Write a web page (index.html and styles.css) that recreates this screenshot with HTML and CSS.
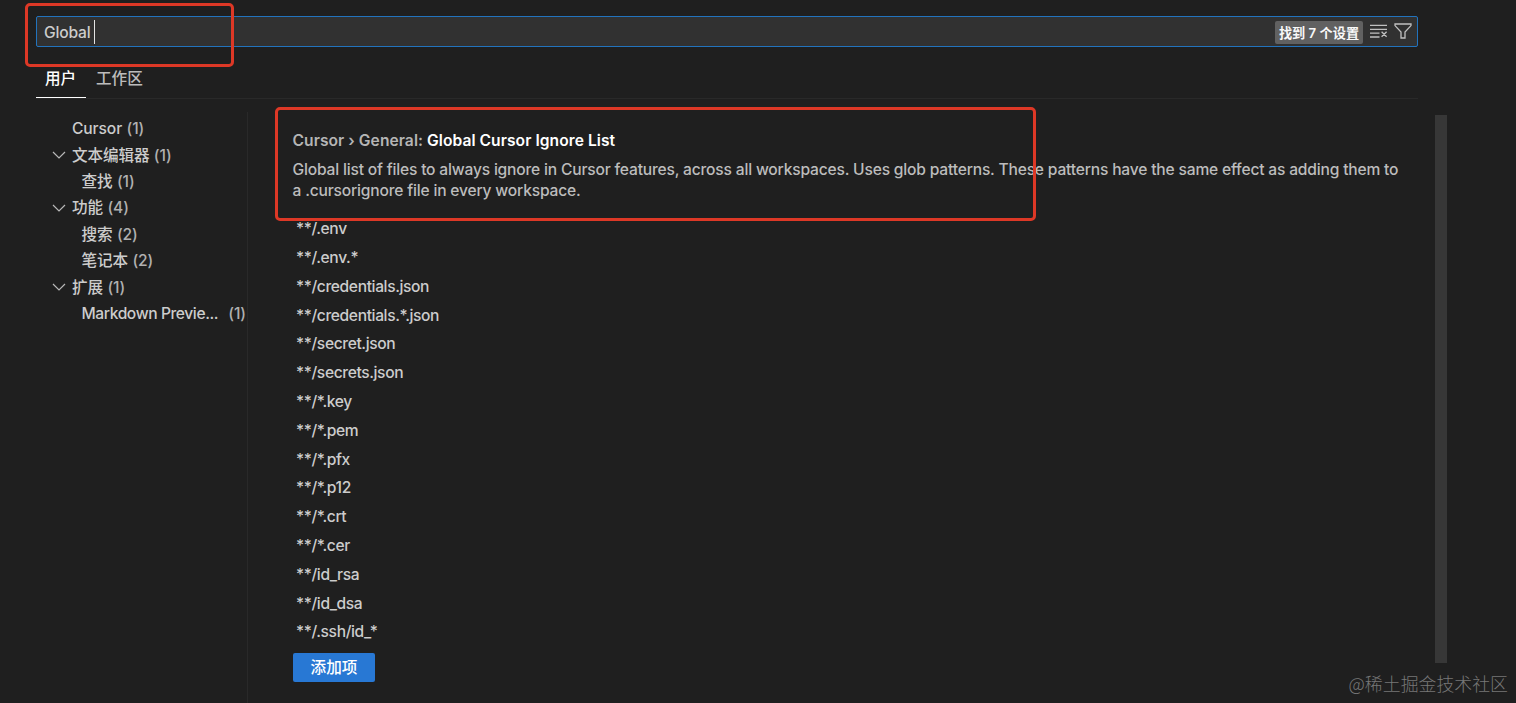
FILE: index.html
```
<!DOCTYPE html>
<html lang="zh-CN">
<head>
<meta charset="utf-8">
<title>设置</title>
<link rel="stylesheet" href="styles.css">
</head>
<body>
<div class="settings">
  <header class="header">
    <div class="search">
      <span class="query">Global</span><span class="caret"></span>
      <div class="search-tools">
        <span class="count">找到 7 个设置</span>
        <svg class="icon clear" width="18" height="18" viewBox="0 0 18 18"><path d="M0 3.4h17M0 7.3h17M0 11.2h9.5M0 15h9.5M11.6 9.8l5 5M16.6 9.8l-5 5"/></svg>
        <svg class="icon filter" width="18" height="18" viewBox="0 0 18 18"><path d="M1 2h16v1.6l-6 6.4v6H7v-6L1 3.6z"/></svg>
      </div>
    </div>
    <nav class="tabs">
      <span class="tab active">用户</span>
      <span class="tab">工作区</span>
    </nav>
  </header>
  <div class="body">
    <aside class="toc">
      <div class="row">Cursor <span class="num">(1)</span></div>
      <div class="row group"><svg class="chevron" width="14" height="8" viewBox="0 0 14 8"><path d="M1 1l6 6 6-6"/></svg>文本编辑器 <span class="num">(1)</span></div>
      <div class="row child">查找 <span class="num">(1)</span></div>
      <div class="row group"><svg class="chevron" width="14" height="8" viewBox="0 0 14 8"><path d="M1 1l6 6 6-6"/></svg>功能 <span class="num">(4)</span></div>
      <div class="row child">搜索 <span class="num">(2)</span></div>
      <div class="row child">笔记本 <span class="num">(2)</span></div>
      <div class="row group"><svg class="chevron" width="14" height="8" viewBox="0 0 14 8"><path d="M1 1l6 6 6-6"/></svg>扩展 <span class="num">(1)</span></div>
      <div class="row child spread"><span class="long">Markdown Previe...</span><span class="num">(1)</span></div>
    </aside>
    <main class="content">
      <h1 class="title"><span class="category">Cursor › General: </span><span class="name">Global Cursor Ignore List</span></h1>
      <p class="description"><span class="line">Global list of files to always ignore in Cursor features, across all workspaces. Uses glob patterns. These patterns have the same effect as adding them to</span><span class="line">a .cursorignore file in every workspace.</span></p>
      <ul class="patterns">
        <li>**/.env</li>
        <li>**/.env.*</li>
        <li>**/credentials.json</li>
        <li>**/credentials.*.json</li>
        <li>**/secret.json</li>
        <li>**/secrets.json</li>
        <li>**/*.key</li>
        <li>**/*.pem</li>
        <li>**/*.pfx</li>
        <li>**/*.p12</li>
        <li>**/*.crt</li>
        <li>**/*.cer</li>
        <li>**/id_rsa</li>
        <li>**/id_dsa</li>
        <li>**/.ssh/id_*</li>
      </ul>
      <button class="add">添加项</button>
    </main>
    <div class="scrollbar"></div>
  </div>
  <div class="mark mark-search"></div>
  <div class="mark mark-setting"></div>
  <div class="watermark">@稀土掘金技术社区</div>
</div>
</body>
</html>
```
FILE: styles.css
```
* { box-sizing: border-box; }
body {
  margin: 0;
  background: #1f1f1f;
  color: #cccccc;
  font-family: "Inter", "Noto Sans CJK SC", sans-serif;
  font-size: 15.6px;
  font-weight: 450;
  font-feature-settings: "calt" 0;
}
.settings {
  position: relative;
  width: 1516px;
  height: 703px;
  overflow: hidden;
  display: flex;
  flex-direction: column;
}
.header { padding: 16px 98px 0 36px; height: 99px; }
.search {
  display: flex;
  align-items: center;
  height: 31px;
  padding: 0 5px 0 7px;
  background: #313131;
  border: 1px solid #2273bd;
  border-radius: 2px;
}
.query { padding-top: 2px; letter-spacing: -0.2px; }
.caret { width: 1px; height: 24px; margin-left: 4px; background: #e4e4e4; }
.search-tools { display: flex; align-items: center; margin-left: auto; }
.count {
  width: 88px;
  height: 23px;
  line-height: 25px;
  margin-right: 7px;
  margin-top: 1px;
  text-align: center;
  white-space: nowrap;
  background: #616161;
  color: #f8f8f8;
  border-radius: 2px;
  font-size: 13.2px;
  font-weight: 600;
}
.icon { position: relative; top: -0.5px; fill: none; stroke: #c0c0c0; stroke-width: 1.3; }
.clear { margin-right: 6px; }
.tabs { display: flex; height: 52px; border-bottom: 1px solid #292929; }
.tab { height: 51px; padding: 20px 10px 0 10px; line-height: 24px; color: #bcbcbc; white-space: nowrap; }
.tab.active { width: 50px; padding-left: 9px; color: #fff; font-weight: 500; border-bottom: 1px solid #fff; }
.body { display: flex; height: 604px; }
.toc {
  width: 248px;
  margin-top: 13px;
  padding: 4.2px 1px 0 0;
  border-right: 1px solid #292929;
}
.row {
  display: flex;
  align-items: center;
  height: 26.4px;
  line-height: 26.4px;
  padding-left: 72px;
  gap: 4.4px;
  white-space: nowrap;
  letter-spacing: -0.1px;
}
.row.group { padding-left: 52px; }
.row.child { padding-left: 81.5px; }
.num { color: #b0b0b0; }
.row.spread { justify-content: space-between; }
.long { letter-spacing: -0.4px; }
.chevron { width: 14px; margin: -2px 1.6px 0 0; fill: none; stroke: #b8b8b8; stroke-width: 1.2; }
.content { width: 1187px; padding: 30px 0 0 44.5px; }
.title { margin: 0; font-size: 15.6px; font-weight: 600; line-height: 24px; white-space: pre; letter-spacing: 0.06px; }
.category { color: #b5b5b5; }
.name { color: #fff; }
.description { margin: 6px 0 0; line-height: 21px; color: #bcbcbc; letter-spacing: -0.183px; }
.line { display: block; white-space: nowrap; }
.patterns { list-style: none; margin: 14.3px 0 0; padding: 0 0 0 3.5px; letter-spacing: -0.38px; }
.patterns li { height: 28.8px; line-height: 28.8px; }
.add {
  display: block;
  width: 82px;
  height: 29px;
  margin-top: 5.7px;
  margin-left: 0.5px;
  padding: 0;
  border: 0;
  border-radius: 2px;
  background: #2878d4;
  color: #fff;
  font: 500 15.6px/29px "Inter", "Noto Sans CJK SC", sans-serif;
}
.scrollbar { width: 12px; height: 548px; margin-top: 16px; background: #373737; }
.mark { position: absolute; border: 3px solid #dd3826; border-radius: 5px; }
.mark-search { left: 25px; top: 3px; width: 209px; height: 64px; }
.mark-setting { left: 275px; top: 107px; width: 761px; height: 114px; }
.watermark {
  position: absolute;
  right: 8px;
  bottom: 7px;
  font: 300 17.9px/26px "Noto Sans CJK SC", sans-serif;
  color: #777;
}
```
